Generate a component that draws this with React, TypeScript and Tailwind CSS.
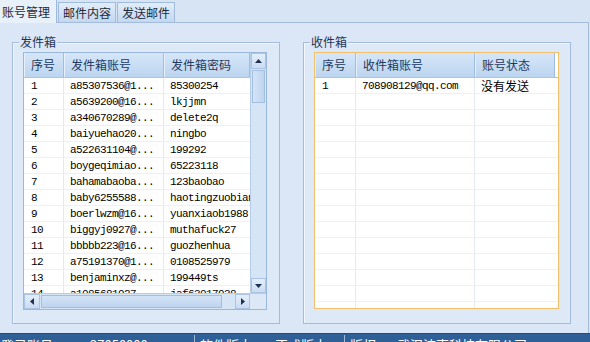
import { FC } from "react"

const cjk = "font-['Noto_Sans_CJK_SC',sans-serif]"
const mono = "font-['Liberation_Mono','Noto_Sans_CJK_SC',monospace]"

const senders: string[][] = [
    ["1", "a85307536@1...", "85300254"],
    ["2", "a5639200@16...", "lkjjmn"],
    ["3", "a340670289@...", "delete2q"],
    ["4", "baiyuehao20...", "ningbo"],
    ["5", "a522631104@...", "199292"],
    ["6", "boygeqimiao...", "65223118"],
    ["7", "bahamabaoba...", "123baobao"],
    ["8", "baby6255588...", "haotingzuobian"],
    ["9", "boerlwzm@16...", "yuanxiaob1988"],
    ["10", "biggyj0927@...", "muthafuck27"],
    ["11", "bbbbb223@16...", "guozhenhua"],
    ["12", "a75191370@1...", "0108525979"],
    ["13", "benjaminxz@...", "199449ts"],
    ["14", "a1085681927...", "jaf63017938"],
]

const HeaderCell: FC<{ w: string; label: string }> = ({ w, label }) => (
    <div className={`${w} h-full shrink-0 flex items-center pl-[6px] border-l border-l-[#e6f0fb] border-r border-r-[#9fbde2] bg-linear-to-b from-[#d6e6f8] to-[#bcd5f0] text-[12px] text-[#1d3a60] ${cjk}`}>
        {label}
    </div>
)

const Arrow: FC<{ dir: "up" | "down" | "left" | "right" }> = ({ dir }) => {
    const pts = {
        up: "0,4 7,4 3.5,0",
        down: "0,0 7,0 3.5,4",
        left: "4,0 4,7 0,3.5",
        right: "0,0 0,7 4,3.5",
    }[dir]
    const box = dir === "up" || dir === "down" ? "0 0 7 4" : "0 0 4 7"
    const size = dir === "up" || dir === "down" ? "w-[7px] h-[4px]" : "w-[4px] h-[7px]"
    return (
        <svg viewBox={box} className={size}>
            <polygon points={pts} fill="#1f3350" />
        </svg>
    )
}

const ScrollBtn: FC<{ dir: "up" | "down" | "left" | "right"; className: string }> = ({ dir, className }) => (
    <div className={`${className} shrink-0 flex items-center justify-center border border-[#a9c4e4] bg-linear-to-b from-[#e4eefa] to-[#cadcf2]`}>
        <Arrow dir={dir} />
    </div>
)

const SenderGrid = () => (
    <div className="w-[244px] h-[258px] flex flex-col border border-[#9ab8dc] bg-white">
        <div className="flex flex-1 min-h-0">
            <div className="flex-1 overflow-hidden flex flex-col">
                <div className="h-[25px] shrink-0 flex border-b border-[#a8c4e6]">
                    <HeaderCell w="w-[40px]" label="序号" />
                    <HeaderCell w="w-[100px]" label="发件箱账号" />
                    <HeaderCell w="w-[86px]" label="发件箱密码" />
                </div>
                {senders.map((r) => (
                    <div key={r[0]} className={`h-[16px] shrink-0 flex border-b border-[#edf1f6] text-[11px] tracking-[-0.6px] text-black ${mono}`}>
                        <div className="w-[40px] shrink-0 pl-[7px] border-r border-[#e4e9f0] leading-[16px]">{r[0]}</div>
                        <div className="w-[100px] shrink-0 pl-[6px] border-r border-[#e4e9f0] leading-[16px] whitespace-nowrap overflow-hidden">{r[1]}</div>
                        <div className="w-[86px] shrink-0 pl-[6px] leading-[16px] whitespace-nowrap overflow-hidden">{r[2]}</div>
                    </div>
                ))}
            </div>
            <div className="w-[16px] shrink-0 flex flex-col bg-[#d6e5f6] border-l border-[#b6cde9]">
                <ScrollBtn dir="up" className="h-[16px]" />
                <div className="mt-[1px] h-[33px] mx-[1px] border border-[#a2bfe0] bg-linear-to-r from-[#d4e4f7] to-[#bed4ee]" />
                <div className="flex-1" />
                <ScrollBtn dir="down" className="h-[15px]" />
            </div>
        </div>
        <div className="h-[16px] shrink-0 flex bg-[#d6e5f6] border-t border-[#b6cde9]">
            <ScrollBtn dir="left" className="w-[16px]" />
            <div className="ml-[1px] w-[181px] my-[1px] border border-[#a2bfe0] bg-linear-to-b from-[#d4e4f7] to-[#bed4ee]" />
            <div className="flex-1" />
            <ScrollBtn dir="right" className="w-[15px]" />
            <div className="w-[16px] shrink-0 bg-[#dce8f6]" />
        </div>
    </div>
)

const ReceiverGrid = () => (
    <div className="w-[245px] h-[257px] flex flex-col border border-[#f2c06c] bg-white overflow-hidden">
        <div className="h-[25px] shrink-0 flex border-b border-[#a8c4e6]">
            <HeaderCell w="w-[41px]" label="序号" />
            <HeaderCell w="w-[119px]" label="收件箱账号" />
            <HeaderCell w="w-[80px]" label="账号状态" />
        </div>
        {Array.from({ length: 15 }).map((_, i) => (
            <div key={i} className="h-[16px] shrink-0 flex border-b border-[#edf1f6] text-black">
                <div className={`w-[41px] shrink-0 pl-[7px] border-r border-[#e4e9f0] leading-[16px] text-[11px] tracking-[-0.6px] ${mono}`}>{i === 0 ? "1" : ""}</div>
                <div className={`w-[119px] shrink-0 pl-[6px] border-r border-[#e4e9f0] leading-[16px] text-[11px] tracking-[-0.6px] ${mono}`}>{i === 0 ? "708908129@qq.com" : ""}</div>
                <div className={`w-[80px] shrink-0 pl-[6px] leading-[16px] text-[12px] ${cjk}`}>{i === 0 ? "没有发送" : ""}</div>
            </div>
        ))}
    </div>
)

const GroupBox: FC<{ title: string; children: React.ReactNode }> = ({ title, children }) => (
    <div className="relative w-[268px] h-[282px] border border-[#a3bcdb] shadow-[inset_1px_1px_0_#f1f6fc] bg-[#dde9f7] pt-[9px] pl-[10px]">
        <span className={`absolute -top-[10px] left-[6px] px-[1px] bg-[#dbe7f6] text-[12px] leading-[17px] text-[#1e3555] ${cjk}`}>{title}</span>
        {children}
    </div>
)

const Tab: FC<{ label: string; active?: boolean }> = ({ label, active }) =>
    active ? (
        <div className={`w-[57px] h-[23px] pl-[2px] flex items-center bg-[#e8f0fa] border-r border-[#9db8db] text-[12px] text-[#1b2a3d] -mb-px z-10 ${cjk}`}>{label}</div>
    ) : (
        <div className={`w-[58px] mt-[2px] h-[20px] flex items-center justify-center border border-b-0 border-[#a1bbdc] bg-linear-to-b from-[#e2edf9] to-[#c3d8f1] text-[12px] text-[#1b2a3d] ${cjk}`}>{label}</div>
    )

export default function App() {
    return (
        <div className="w-[590px] h-[342px] overflow-hidden flex flex-col bg-[#d7e4f4]">
            <div className="h-[22px] shrink-0 flex items-end gap-[1px]">
                <Tab label="账号管理" active />
                <Tab label="邮件内容" />
                <Tab label="发送邮件" />
            </div>
            <div className="w-[589px] h-[311px] shrink-0 border-t border-r border-[#a3bcdb] bg-[#dbe7f6] flex gap-[23px] pl-[12px] pt-[19px]">
                <GroupBox title="发件箱">
                    <SenderGrid />
                </GroupBox>
                <GroupBox title="收件箱">
                    <ReceiverGrid />
                </GroupBox>
            </div>
            <div className={`h-[22px] shrink-0 flex items-start pt-[1px] bg-[#2f5f97] border-t border-[#244c7c] text-[13px] text-white ${cjk}`}>
                <div className="w-[195px] flex gap-[24px] pl-[1px] border-r border-[#9fb9db] h-full">
                    <span>登录账号：</span>
                    <span>27050000...</span>
                </div>
                <div className="w-[150px] flex gap-[10px] pl-[5px] border-r border-[#9fb9db] h-full">
                    <span>软件版本：</span>
                    <span>正式版本</span>
                </div>
                <div className="flex gap-[8px] pl-[5px]">
                    <span>版权：</span>
                    <span>武汉波克科技有限公司</span>
                </div>
            </div>
        </div>
    )
}
